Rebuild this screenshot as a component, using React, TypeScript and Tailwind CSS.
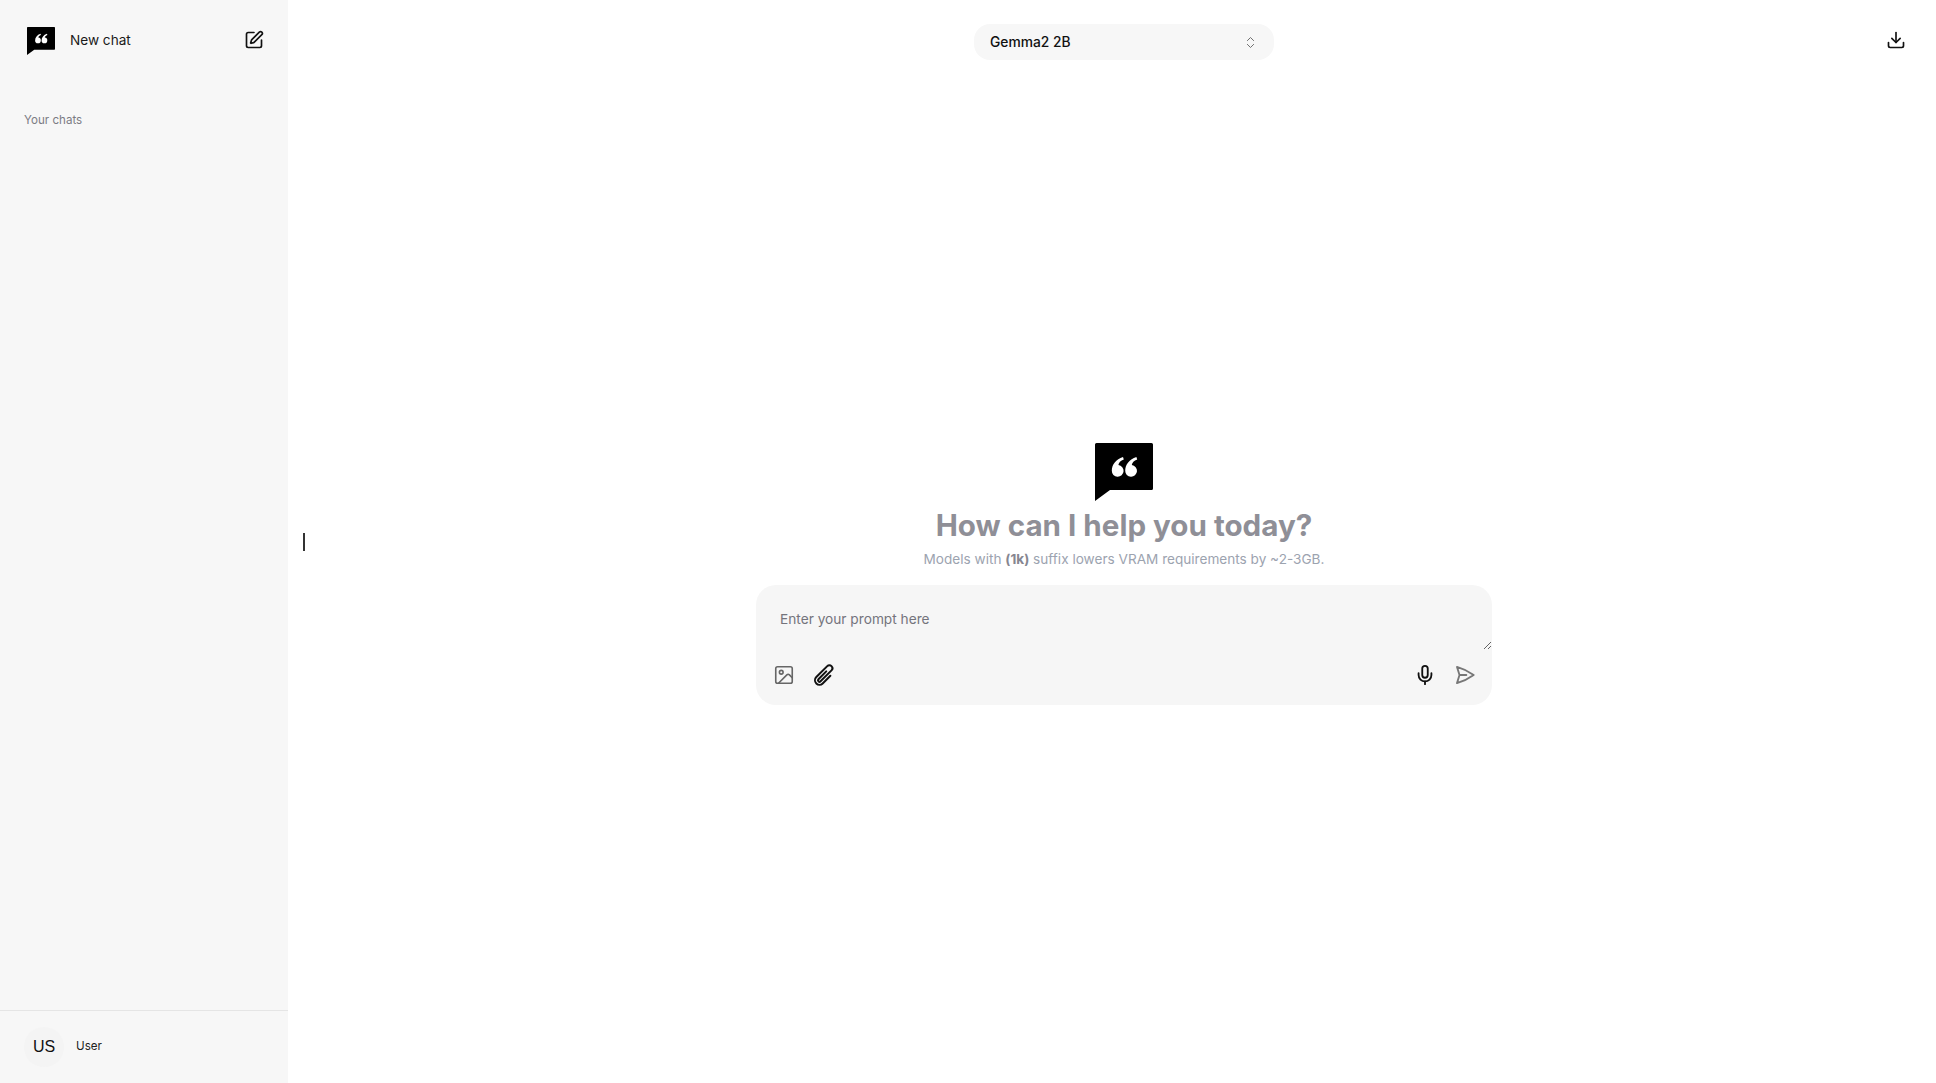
import { ChevronsUpDown, Download, Image, Mic, SquarePen } from "lucide-react";

function Logo({ className }: { className: string }) {
  return (
    <svg viewBox="0 0 58 58" className={className}>
      <path d="M1.5 0H56.5A1.5 1.5 0 0 1 58 1.5V45.5A1.5 1.5 0 0 1 56.5 47H15L0 58V1.5A1.5 1.5 0 0 1 1.5 0Z" fill="#000" />
      <path d="M28 14C21 16.5 16.8 21.5 16.8 27.8a5.9 5.9 0 1 0 6.6-5.8C23.6 19.6 25.6 17.6 28.8 16.4Z" fill="#fff" />
      <path d="M41.4 14C34.4 16.5 30.2 21.5 30.2 27.8a5.9 5.9 0 1 0 6.6-5.8C37 19.6 39 17.6 42.2 16.4Z" fill="#fff" />
    </svg>
  );
}

export default function App() {
  return (
    <div className="flex h-screen w-full bg-white font-['Inter','Liberation_Sans',sans-serif] text-[#111]">
      <aside className="flex w-[288px] shrink-0 flex-col bg-[#f7f7f7]">
        <div className="flex h-[80px] items-center pl-[27px] pr-[24px]">
          <Logo className="mt-[2px] h-[28px] w-[28px]" />
          <span className="ml-[15px] flex-1 text-[13.6px] text-[#1a1a1a]">New chat</span>
          <SquarePen className="h-[20px] w-[20px]" strokeWidth={2} />
        </div>
        <div className="mt-[32px] pl-[24px] text-[11.6px] text-[#7c7c84]">Your chats</div>
        <div className="flex-1" />
        <div className="flex h-[73px] items-center border-t border-[#e5e5e5] pl-[24px]">
          <div className="flex h-[40px] w-[40px] items-center justify-center rounded-full bg-[#f4f4f4] font-['Liberation_Sans',sans-serif] text-base">
            US
          </div>
          <span className="ml-[12px] text-[11.6px] text-[#222]">User</span>
        </div>
      </aside>

      <main className="relative flex flex-1 flex-col pl-6">
        <header className="flex h-[84px] justify-center pt-6">
          <div className="flex h-[36px] w-[300px] items-center justify-between rounded-2xl bg-[#f7f7f7] pl-4 pr-[16px]">
            <span className="text-[13.8px] font-medium text-[#111]">Gemma2 2B</span>
            <ChevronsUpDown className="h-[15px] w-[15px] text-[#666]" strokeWidth={1.5} />
          </div>
        </header>
        <button className="absolute right-[30px] top-[30px]">
          <Download className="h-[20px] w-[20px]" strokeWidth={2} />
        </button>

        <span className="absolute left-[15px] top-[533px] h-[18px] w-[2px] bg-[#333]" />

        <section className="flex flex-1 flex-col items-center justify-center pb-[20px]">
          <Logo className="h-[58px] w-[58px]" />
          <h1 className="mt-[5px] text-[29.6px] font-bold leading-[38px] text-[#8f8f97]">How can I help you today?</h1>
          <p className="mt-[5px] text-[13.6px] leading-[20px] text-[#9ca3af]">
            Models with <strong className="font-bold text-[#868690]">(1k)</strong> suffix lowers VRAM requirements by
            ~2-3GB.
          </p>
          <div className="mt-[16px] flex h-[120px] w-[736px] flex-col rounded-[20px] bg-[#f6f6f6]">
            <textarea
              placeholder="Enter your prompt here"
              className="h-[65px] w-full resize-y bg-transparent px-6 pt-6 text-[13.7px] leading-[20px] outline-none placeholder:text-[#74747c]"
            />
            <div className="flex flex-1 items-center justify-between pb-[5px] pl-[17px] pr-[16px]">
              <div className="flex items-center gap-[17px]">
                <Image className="h-[22px] w-[22px] text-[#666]" strokeWidth={1.75} />
                <svg viewBox="0 0 24 24" fill="none" stroke="#111" strokeWidth={2} strokeLinecap="round" strokeLinejoin="round" className="h-[24px] w-[24px]">
                  <path d="m18.375 12.739-7.693 7.693a4.5 4.5 0 0 1-6.364-6.364l10.94-10.94A3 3 0 1 1 19.5 7.372L8.552 18.32m.009-.01-.01.01m5.699-9.941-7.81 7.81a1.5 1.5 0 0 0 2.112 2.13" />
                </svg>
              </div>
              <div className="flex items-center gap-[18px]">
                <Mic className="h-[22px] w-[22px] text-[#111]" strokeWidth={2} />
                <svg viewBox="0 0 24 24" fill="none" stroke="#777" strokeWidth={2} strokeLinecap="round" strokeLinejoin="round" className="h-[22px] w-[22px]">
                  <path d="M6 12 3.269 3.125A59.769 59.769 0 0 1 21.485 12 59.768 59.768 0 0 1 3.27 20.875L5.999 12Zm0 0h7.5" />
                </svg>
              </div>
            </div>
          </div>
        </section>
      </main>
    </div>
  );
}
